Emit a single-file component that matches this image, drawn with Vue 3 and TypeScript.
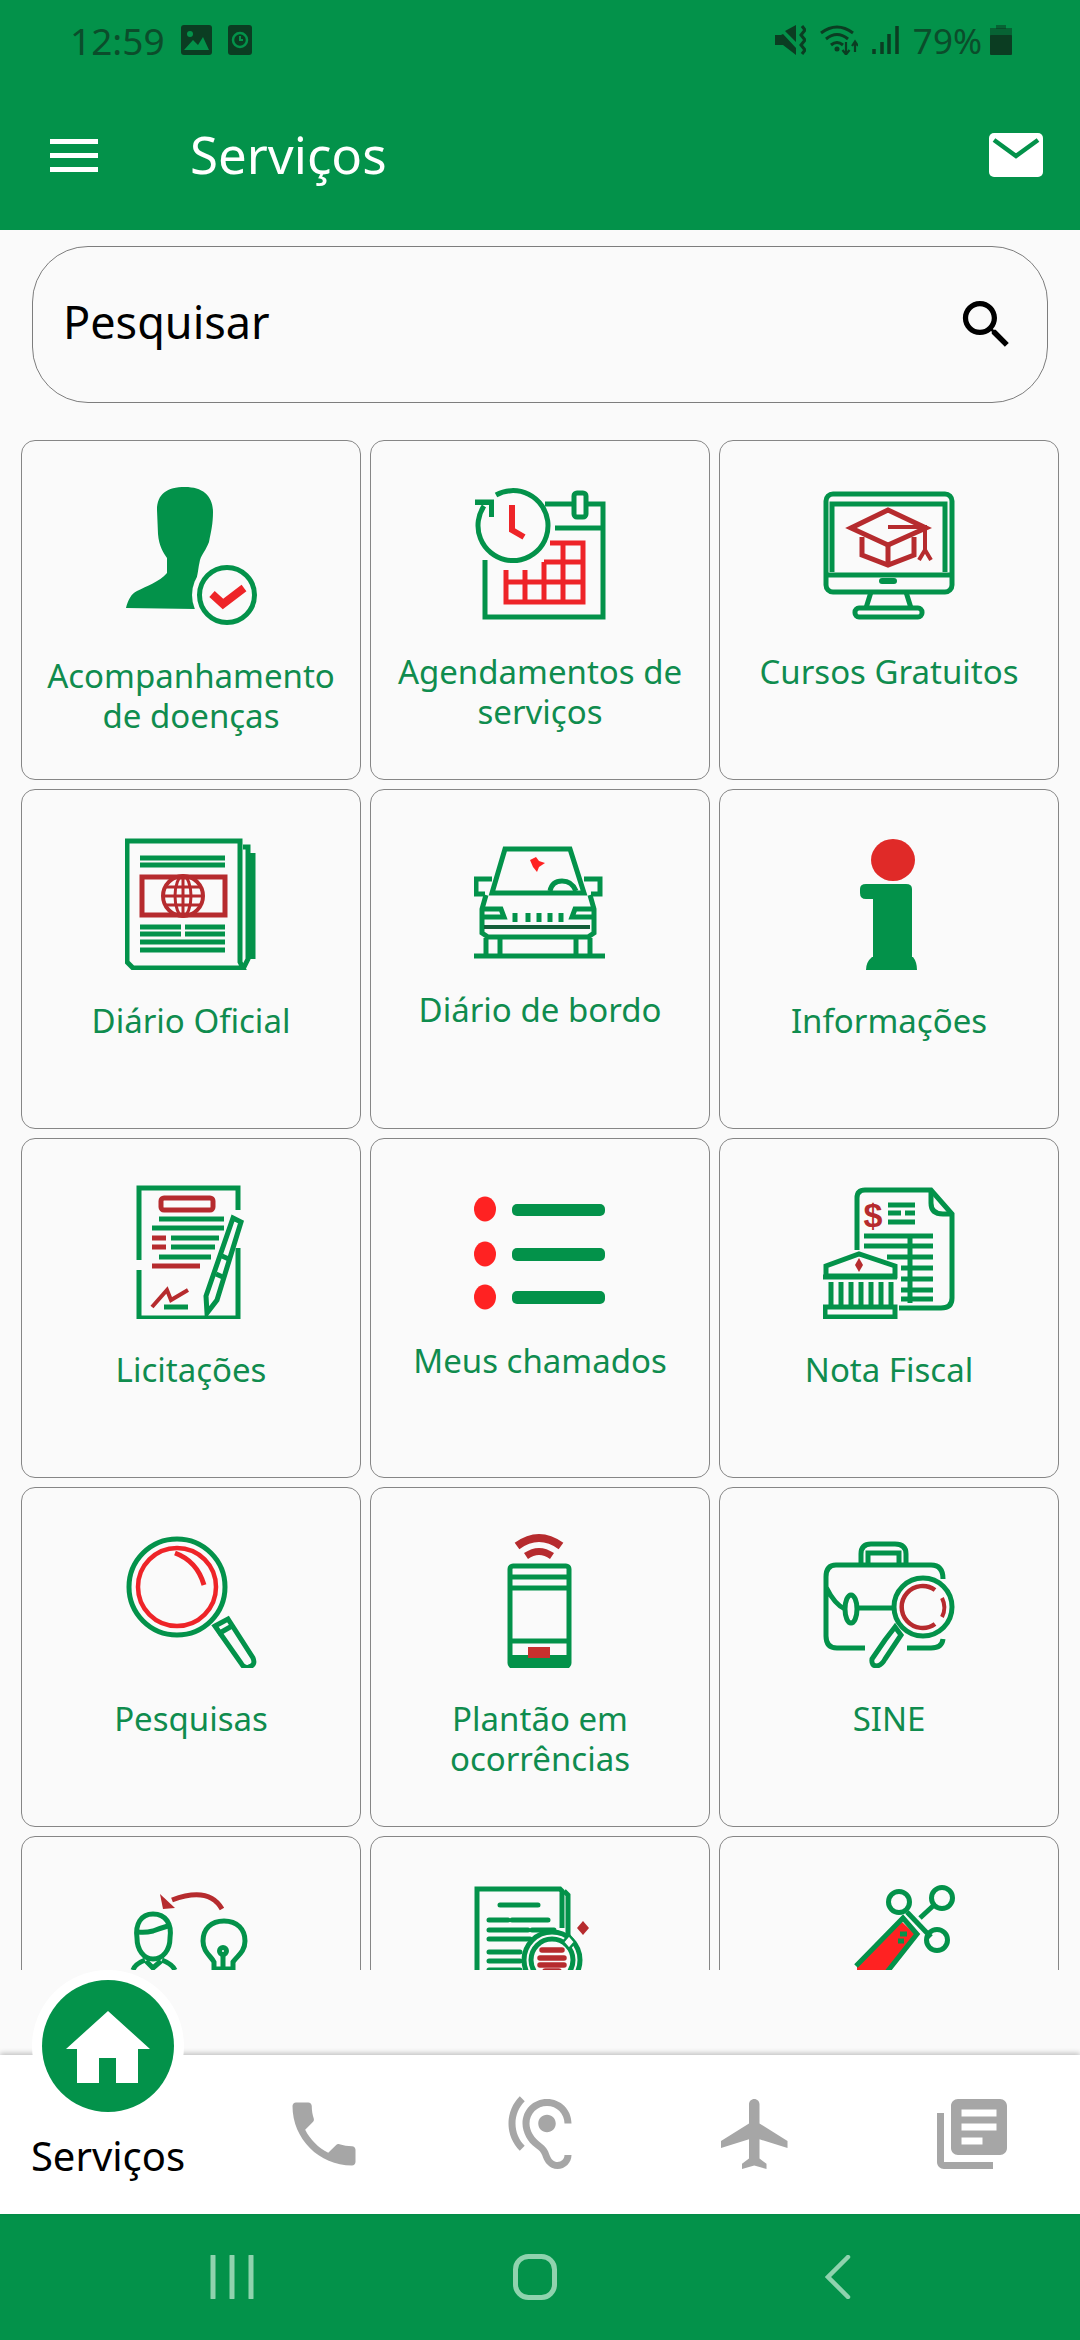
<template>
  <div class="screen">
    <header class="top">
      <div class="status">
        <div class="status-side">
          <span class="clock">12:59</span>
          <svg width="31" height="30" viewBox="0 0 31 30">
            <rect width="31" height="30" rx="3" fill="#0b3d22" />
            <circle cx="9" cy="9" r="3" fill="#03924a" />
            <path d="M3 25 L12 15 L17 20 L22 12 L28 25 Z" fill="#03924a" />
          </svg>
          <svg width="24" height="30" viewBox="0 0 24 30">
            <rect width="24" height="30" rx="3" fill="#0b3d22" />
            <circle cx="12" cy="15" r="7" fill="none" stroke="#03924a" stroke-width="2.5" />
            <path d="M12 11 V15 H15" fill="none" stroke="#03924a" stroke-width="2" />
          </svg>
        </div>
        <div class="status-side right">
          <svg width="31" height="30" viewBox="0 0 31 30">
            <path d="M0 10 H6 L8 9 L21 23 V30 L8 20 H0 Z M10 6 L21 0 V17 Z" fill="#0b3d22" />
            <path d="M27 1 L30 5 L26 10 L30 15 L26 20 L30 25 L27 29" fill="none" stroke="#0b3d22" stroke-width="3" />
          </svg>
          <svg width="38" height="30" viewBox="0 0 38 30">
            <path d="M1 8 Q17 -4 33 8 M6 14 Q17 5 28 14 M11 20 Q17 15 23 20" fill="none" stroke="#0b3d22" stroke-width="3" />
            <circle cx="17" cy="24" r="2.5" fill="#0b3d22" />
            <path d="M26 17 V29 M22.5 25 L26 29.5 L29.5 25 M35 27 V17 M32 21 L35 16.5 L38 21" fill="none" stroke="#0b3d22" stroke-width="2.2" />
          </svg>
          <svg width="27" height="28" viewBox="0 0 27 28">
            <path d="M2 23 V28 M10 16 V28 M17 8 V28 M25 0 V28" stroke="#0b3d22" stroke-width="3.5" />
          </svg>
          <span class="batt-text">79%</span>
          <svg class="batt" width="22" height="30" viewBox="0 0 22 30">
            <rect x="6" width="10" height="4" fill="#0b3d22" opacity="0.55" />
            <rect y="3" width="22" height="8" fill="#0b3d22" opacity="0.55" />
            <rect y="10" width="22" height="20" rx="1" fill="#0b3d22" />
          </svg>
        </div>
      </div>
      <div class="toolbar">
        <div class="burger"><i></i><i></i><i></i></div>
        <span class="title">Serviços</span>
        <svg width="54" height="44" viewBox="0 0 54 44">
          <rect width="54" height="44" rx="5" fill="#fff" />
          <path d="M5 7 L27 23 L49 7" fill="none" stroke="#03924a" stroke-width="4.5" />
        </svg>
      </div>
    </header>

    <div class="search">
      <span>Pesquisar</span>
      <svg width="63" height="63" viewBox="0 0 24 24">
        <path
          d="M15.5 14h-.79l-.28-.27C15.41 12.59 16 11.11 16 9.5 16 5.91 13.09 3 9.5 3S3 5.91 3 9.5 5.91 16 9.5 16c1.61 0 3.09-.59 4.23-1.57l.27.28v.79l5 4.99L20.49 19l-4.99-5zm-6 0C7.01 14 5 11.99 5 9.5S7.01 5 9.5 5 14 7.01 14 9.5 11.99 14 9.5 14z"
        />
      </svg>
    </div>

    <div class="list">
      <div class="grid">
        <div v-for="item in items" :key="item.id" class="card">
          <svg class="icon" width="132" :height="item.h" :viewBox="`0 0 132 ${item.h}`">
            <template v-if="item.id === 'doencas'">
              <path
                class="gf"
                d="M32 30 C32 14 42 7 60 7 C78 7 88 16 88 32 C88 44 86 52 84 62 C81 70 77 74 75 80 C73 88 73 96 70 104 V129 L1 128 C3 120 6 114 12 111 C22 106 34 102 42 93 V78 C38 72 34 66 33 54 Z"
              />
              <circle cx="102" cy="115" r="35" fill="#fafafa" />
              <circle class="g" cx="102" cy="115" r="27.5" stroke-width="7" />
              <path class="r" d="M87 114 L98 124 L119 108" stroke-width="8" />
            </template>

            <template v-else-if="item.id === 'agenda'">
              <path class="g" d="M71 24 H129 V137 H11 V80" />
              <path class="g" d="M81 48 H129" />
              <rect class="g wh" x="100" y="13" width="12" height="24" rx="3" />
              <path
                class="r"
                d="M76 63 H109 V122 H32 V90 M89 63 V122 M70 82 V122 M51 90 V122 M70 82 H109 M32 102 H109"
                stroke-width="5"
              />
              <path class="g wh" d="M22 15 A35 35 0 1 1 10 26" stroke-width="6" />
              <path class="gf" d="M1 19.5 H20 V37 H15 V25 H1 Z" />
              <path class="r" d="M38 25 V50 L50 57" stroke-width="6" />
            </template>

            <template v-else-if="item.id === 'cursos'">
              <rect class="g" x="3" y="14" width="126" height="98" rx="7" />
              <path class="g" d="M9 92 V24 H122 V92" stroke-width="3" />
              <path class="g" d="M3 95 H129" stroke-width="6" />
              <rect class="gf" x="56" y="98" width="18" height="6" rx="3" />
              <path class="g" d="M48 112 L43 128 M83 112 L88 128" />
              <rect class="g" x="32" y="128" width="67" height="9" rx="4" />
              <path class="dr" d="M39 57 V75 L65 85 L91 75 V57 M65 66 V85" stroke-width="5" />
              <path class="dr wh" d="M65 30 L103 48 L65 65 L28 48 Z" stroke-width="5" />
              <path class="dr" d="M65 47 H102 V72 M96 80 L102 70 L108 80" stroke-width="4" />
            </template>

            <template v-else-if="item.id === 'diario'">
              <path class="g" d="M118 18 H123 V130 L118 140 M128 24 V130" stroke-width="3.5" />
              <path class="g wh" d="M2 12 H115 V133 L118 139 H8 L2 133 Z" stroke-width="4" />
              <path class="g" d="M15 29 H100 M15 36 H100 M15 98 H56 M60 98 H100 M15 105 H56 M60 105 H100 M15 113 H100 M15 121 H100" stroke-width="4.5" />
              <rect class="dr" x="17" y="48" width="83" height="38" stroke-width="5" />
              <ellipse class="dr" cx="58" cy="67" rx="20" ry="20" stroke-width="4" />
              <ellipse class="dr" cx="58" cy="67" rx="8" ry="20" stroke-width="3" />
              <path class="dr" d="M38 67 H78 M58 47 V87 M41 58 H75 M41 76 H75" stroke-width="3" />
            </template>

            <template v-else-if="item.id === 'bordo'">
              <path class="g" d="M31 20 H96 L110 64 H18 Z" stroke-width="4.5" />
              <path class="g" d="M18 50 H2 V65 H11 M110 50 H126 V65 H117" stroke-width="4" />
              <path class="g" d="M76 62 Q78 52 88 52 Q98 52 102 62" stroke-width="4" />
              <path class="g" d="M12 66 L8 80 V104 L14 108 H114 L120 104 V80 L116 66" stroke-width="4" />
              <path class="g" d="M10 80 H27 L30 88 H10 M118 80 H101 L98 88 H118" stroke-width="3.5" />
              <path class="g" d="M41 84 V93 M54 84 V93 M65 84 V93 M76 84 V93 M87 84 V93" stroke-width="3" />
              <path d="M10 98 H116" fill="none" stroke="#155f3a" stroke-width="4" />
              <path class="g" d="M12 109 V125 M26 109 V125 M102 109 V125 M116 109 V125" stroke-width="3.5" />
              <path class="g" d="M0 127 H131" stroke-width="4" />
              <path class="rf" d="M56 31 L62 28 L65 32 L71 34 L65 38 L63 43 L59 38 Z" />
            </template>

            <template v-else-if="item.id === 'info'">
              <ellipse cx="70" cy="31" rx="22" ry="21" fill="#e02a28" />
              <path
                class="gf"
                d="M37 60 Q37 55 43 55 H83 Q89 55 89 60 V128 H90 Q94 133 94 141 H43 Q43 133 49 128 H50 V70 H43 Q37 70 37 64 Z"
              />
            </template>

            <template v-else-if="item.id === 'licitacoes'">
              <path class="g" d="M113 32 V10 H14 V82 M14 92 V140 H113 V70" stroke-width="4" />
              <rect class="dr" x="36" y="20" width="52" height="12" rx="3" stroke-width="5" />
              <path class="g" d="M34 41 H99 M27 50 H99 M46 60 H94 M46 69 H90 M34 79 H86 M39 129 H63" stroke-width="5" />
              <path class="dr" d="M27 60 H41 M27 69 H41 M27 88 H75" stroke-width="5" />
              <path class="dr" d="M27 129 L42 112 L46 122 L63 112" stroke-width="4" />
              <path class="g wh" d="M108 40 L116 44 L92 122 L82 135 L81 118 Z" stroke-width="3.5" />
              <path class="g" d="M97 78 L106 82 M91 96 L100 100" stroke-width="3" />
            </template>

            <template v-else-if="item.id === 'chamados'">
              <ellipse class="rf" cx="11" cy="31" rx="11" ry="12.5" />
              <ellipse class="rf" cx="11" cy="76" rx="11" ry="12.5" />
              <ellipse class="rf" cx="11" cy="119" rx="11" ry="12.5" />
              <rect class="gf" x="38" y="26" width="93" height="12" rx="5" />
              <rect class="gf" x="38" y="70" width="93" height="13" rx="5" />
              <rect class="gf" x="38" y="113" width="93" height="13" rx="5" />
            </template>

            <template v-else-if="item.id === 'nota'">
              <path class="g" d="M34 72 V20 Q34 12 42 12 H108 L129 36 V120 Q129 130 118 130 H76" stroke-width="4.5" />
              <path class="g" d="M108 12 V25 Q108 36 120 36 H129" stroke-width="4" />
              <path class="g" d="M65 27 H92 M65 35 H78 M82 35 H92 M65 44 H92 M41 58 H110 M41 68 H110 M64 79 H110 M78 90 H110 M78 101 H110 M78 112 H110 M78 121 H110" stroke-width="5" />
              <path class="g" d="M87 58 V125" stroke-width="4" />
              <text x="50" y="49" class="dollar">$</text>
              <path class="g wh" d="M3 98 V88 L36 76 L72 88 V98 Z" stroke-width="4.5" />
              <path class="drf" d="M36 80 L40 87 L36 94 L32 87 Z" />
              <path class="g" d="M0 99 H74" stroke-width="6" />
              <path class="g" d="M8 104 V127 M18 104 V127 M28 104 V127 M38 104 V127 M48 104 V127 M58 104 V127 M68 104 V127" stroke-width="4.5" />
              <rect class="g" x="2" y="129" width="70" height="10" stroke-width="4" />
            </template>

            <template v-else-if="item.id === 'pesquisas'">
              <path class="g" d="M90 99 L103 92 L128 131 Q131 138 124 140 Q119 142 116 136 Z" stroke-width="5" />
              <path class="g" d="M93 107 L107 99" stroke-width="4" />
              <circle class="g wh" cx="52" cy="60" r="48" stroke-width="6" />
              <circle class="r" cx="52" cy="60" r="39" stroke-width="4.5" />
              <path class="r" d="M50 26 Q72 34 79 58" stroke-width="5" />
            </template>

            <template v-else-if="item.id === 'plantao'">
              <path class="dr" d="M43 19 Q65 3 87 19" stroke-width="8" />
              <path class="dr" d="M52 29 Q65 20 78 29" stroke-width="7" />
              <rect class="g" x="36" y="39" width="59" height="100" rx="3" stroke-width="6" />
              <path class="g" d="M36 50 H95 M36 61 H95 M36 114 H95" stroke-width="4" />
              <path class="gf" d="M36 128 H95 V141 H36 Z" />
              <rect class="rf dk" x="54" y="120" width="22" height="11" />
            </template>

            <template v-else-if="item.id === 'sine'">
              <path class="g" d="M38 37 V27 Q38 17 48 17 H72 Q83 17 83 27 V37 M45 37 V26 H76 V37" stroke-width="4" />
              <path class="g" d="M120 52 Q120 38 108 38 H13 Q3 38 3 50 V109 Q3 121 14 121 H42 M84 121 H108 Q119 121 120 112 M3 60 Q12 78 22 82" stroke-width="4" />
              <ellipse class="g wh" cx="28" cy="82" rx="6" ry="14" stroke-width="4" />
              <path class="g" d="M34 81 H70" stroke-width="5" />
              <path class="g wh" d="M72 100 L62 113 L49 132 Q48 139 54 139 Q59 138 62 132 L78 108 Z" stroke-width="4" />
              <circle class="g wh" cx="100" cy="80" r="29" stroke-width="5" />
              <path class="dr" d="M112 97 A21 21 0 1 1 112 63" stroke-width="4.5" />
              <path class="dr" d="M119 71 A21 21 0 0 1 119 90" stroke-width="4" />
            </template>

            <template v-else-if="item.id === 'atendimento'">
              <path class="dr" d="M97 33 Q84 10 47 24" stroke-width="5" />
              <path class="drf" d="M35 18 L38 33 L50 32 Z" />
              <path class="g" d="M12 62 C10 48 16 38 28 38 C41 38 47 48 45 62 C45 74 38 83 28 83 C19 83 12 74 12 62 Z" stroke-width="4" />
              <path class="g" d="M13 56 Q20 57 28 55 Q36 52 43 50" stroke-width="4" />
              <path class="g" d="M8 94 Q10 88 20 84 M50 94 Q47 88 37 84 M21 85 L28 92 L36 85" stroke-width="4" />
              <path class="g" d="M89 93 V86 C86 80 78 76 78 65 C78 53 86 45 99 45 C112 45 120 53 120 65 C120 76 112 80 108 86 V93 Z" stroke-width="4" />
              <circle class="g" cx="98" cy="75" r="3.5" stroke-width="3" />
              <path class="g" d="M98 79 V92" stroke-width="3" />
            </template>

            <template v-else-if="item.id === 'documento'">
              <path class="g" d="M3 100 V13 H86 L88 15 V52" stroke-width="5" />
              <path class="g" d="M90 15 L94 19 V62" stroke-width="3" />
              <path class="g round" d="M26 29 H64 M15 44 H34 M38 44 H74 M15 54 H54 M58 54 H80 M15 63 H56 M15 76 H46 M15 85 H46 M15 94 H46" stroke-width="5" />
              <circle class="g wh" cx="78" cy="84" r="28" stroke-width="5" />
              <circle class="g" cx="78" cy="84" r="21" stroke-width="3" />
              <path class="dr round" d="M68 74 H88 M66 82 H90 M66 89 H90 M71 95 H85" stroke-width="5.5" />
              <path d="M95 59 L101 66 L95 73 L89 66 Z" fill="#fafafa" stroke="#03924a" stroke-width="2.5" />
              <path class="drf" d="M109 45 L115 52 L109 59 L103 52 Z" />
            </template>

            <template v-else-if="item.id === 'teste'">
              <circle class="g" cx="76" cy="26" r="10.5" stroke-width="4.5" />
              <circle class="g" cx="119" cy="22" r="10.5" stroke-width="4.5" />
              <circle class="g" cx="114" cy="64" r="10.5" stroke-width="4.5" />
              <path class="g" d="M97 42 L110 30 M104 57 L108 61" stroke-width="4.5" />
              <path class="rf" d="M79 46 L94 60 L65 96 L34 96 V88 Z" />
              <path class="g" d="M33 90 L80 42 L94 58 L64 96" stroke-width="4" />
              <path class="g" d="M84 36 L104 57" stroke-width="4" />
              <path class="g" d="M77 58 H84 M75 65 H81" stroke-width="3" />
            </template>
          </svg>
          <div v-if="item.label" class="label">{{ item.label }}</div>
        </div>
      </div>
    </div>

    <nav class="tabs">
      <div class="tab active">
        <div class="home-badge">
          <svg width="84" height="72" viewBox="0 0 84 72">
            <path d="M42 0 L84 38 H72 V72 H50 V47 H33 V72 H11 V38 H0 Z" />
          </svg>
        </div>
        <span>Serviços</span>
      </div>
      <div class="tab">
        <svg width="84" height="84" viewBox="0 0 24 24">
          <path
            d="M6.62 10.79c1.44 2.83 3.76 5.14 6.59 6.59l2.2-2.2c.27-.27.67-.36 1.02-.24 1.12.37 2.33.57 3.57.57.55 0 1 .45 1 1V20c0 .55-.45 1-1 1-9.39 0-17-7.61-17-17 0-.55.45-1 1-1h3.5c.55 0 1 .45 1 1 0 1.25.2 2.45.57 3.57.11.35.03.74-.25 1.02l-2.2 2.2z"
          />
        </svg>
      </div>
      <div class="tab">
        <svg width="84" height="84" viewBox="0 0 24 24">
          <path
            d="M17 20c-.29 0-.56-.06-.76-.15-.71-.37-1.21-.88-1.71-2.38-.51-1.56-1.47-2.29-2.39-3-.79-.61-1.61-1.24-2.32-2.53C9.29 10.98 9 9.93 9 9c0-2.8 2.2-5 5-5s5 2.2 5 5h2c0-3.93-3.07-7-7-7S7 5.07 7 9c0 1.26.38 2.65 1.07 3.9.91 1.65 1.98 2.48 2.85 3.15.81.62 1.39 1.07 1.71 2.05.6 1.82 1.37 2.84 2.73 3.55.51.23 1.07.35 1.64.35 2.21 0 4-1.79 4-4h-2c0 1.1-.9 2-2 2zM7.64 2.64L6.22 1.22C4.23 3.21 3 5.96 3 9s1.23 5.79 3.22 7.78l1.41-1.41C6.01 13.74 5 11.49 5 9s1.01-4.74 2.64-6.36zM11.5 9c0 1.38 1.12 2.5 2.5 2.5s2.5-1.12 2.5-2.5-1.12-2.5-2.5-2.5-2.5 1.12-2.5 2.5z"
          />
        </svg>
      </div>
      <div class="tab">
        <svg width="84" height="84" viewBox="0 0 24 24">
          <path d="M21 16v-2l-8-5V3.5c0-.83-.67-1.5-1.5-1.5S10 2.67 10 3.5V9l-8 5v2l8-2.5V19l-2 1.5V22l3.5-1 3.5 1v-1.5L13 19v-5.5l8 2.5z" />
        </svg>
      </div>
      <div class="tab">
        <svg width="84" height="84" viewBox="0 0 24 24">
          <path
            d="M4 6H2v14c0 1.1.9 2 2 2h14v-2H4V6zm16-4H8c-1.1 0-2 .9-2 2v12c0 1.1.9 2 2 2h12c1.1 0 2-.9 2-2V4c0-1.1-.9-2-2-2zm-1 9H9V9h10v2zm-4 4H9v-2h6v2zm4-8H9V5h10v2z"
          />
        </svg>
      </div>
    </nav>

    <div class="sysnav">
      <svg width="44" height="44" viewBox="0 0 44 44">
        <path d="M3 1 V43 M22 1 V43 M41 1 V43" stroke="#8fd3ae" stroke-width="5" stroke-linecap="round" />
      </svg>
      <svg width="44" height="46" viewBox="0 0 44 46">
        <rect x="2.5" y="2.5" width="39" height="41" rx="13" fill="none" stroke="#8fd3ae" stroke-width="5" />
      </svg>
      <svg width="26" height="44" viewBox="0 0 26 44">
        <path d="M23 2 L3 22 L23 42" fill="none" stroke="#8fd3ae" stroke-width="4.5" stroke-linecap="round" />
      </svg>
    </div>
  </div>
</template>

<script setup lang="ts">
interface Service {
  id: string
  label?: string
  h: number
}

const items: Service[] = [
  { id: 'doencas', label: 'Acompanhamento de doenças', h: 145 },
  { id: 'agenda', label: 'Agendamentos de serviços', h: 141 },
  { id: 'cursos', label: 'Cursos Gratuitos', h: 141 },
  { id: 'diario', label: 'Diário Oficial', h: 141 },
  { id: 'bordo', label: 'Diário de bordo', h: 130 },
  { id: 'info', label: 'Informações', h: 141 },
  { id: 'licitacoes', label: 'Licitações', h: 141 },
  { id: 'chamados', label: 'Meus chamados', h: 132 },
  { id: 'nota', label: 'Nota Fiscal', h: 141 },
  { id: 'pesquisas', label: 'Pesquisas', h: 141 },
  { id: 'plantao', label: 'Plantão em ocorrências', h: 141 },
  { id: 'sine', label: 'SINE', h: 141 },
  // last row is cut off by the tab bar, labels never show
  { id: 'atendimento', h: 141 },
  { id: 'documento', h: 141 },
  { id: 'teste', h: 141 }
]
</script>

<style>
html,
body {
  margin: 0;
  background: #fafafa;
}
</style>

<style scoped>
.screen {
  width: 1080px;
  height: 2340px;
  display: flex;
  flex-direction: column;
  overflow: hidden;
  background: #fafafa;
  font-family: 'Noto Sans', sans-serif;
}

.top {
  height: 230px;
  background: #03924a;
  flex: none;
}

.status {
  height: 80px;
  padding: 0 68px 0 70px;
  display: flex;
  justify-content: space-between;
  align-items: center;
}

.status-side {
  display: flex;
  align-items: center;
  gap: 16px;
}

.status-side.right {
  gap: 14px;
}

.clock,
.batt-text {
  font-size: 37px;
  color: #0b4d2b;
}

.batt-text {
  font-size: 35px;
}

.batt {
  margin-left: -6px;
}

.toolbar {
  height: 150px;
  padding: 0 37px 0 50px;
  display: flex;
  align-items: center;
}

.burger {
  width: 48px;
  display: flex;
  flex-direction: column;
  gap: 9px;
}

.burger i {
  height: 5px;
  background: #fff;
}

.title {
  margin-left: 92px;
  margin-bottom: 3px;
  font-size: 51px;
  color: #fff;
  flex: 1;
}

.search {
  height: 157px;
  box-sizing: border-box;
  margin: 16px 32px 37px;
  padding: 0 33px 0 30px;
  border: 1.5px solid #7d7d7d;
  border-radius: 56px;
  display: flex;
  align-items: center;
  justify-content: space-between;
  font-size: 45px;
  color: #000;
  flex: none;
}

.search span {
  margin-bottom: 6px;
}

.search svg {
  margin-right: -4px;
}

.list {
  flex: 1;
  overflow: hidden;
  margin-bottom: 85px;
  padding: 0 21px;
}

.grid {
  display: grid;
  grid-template-columns: repeat(3, 340px);
  justify-content: space-between;
  row-gap: 9px;
}

.card {
  height: 340px;
  box-sizing: border-box;
  padding-top: 39px;
  border: 1.5px solid #868686;
  border-radius: 14px;
  background: #fafafa;
  display: flex;
  flex-direction: column;
  align-items: center;
  text-align: center;
}

.icon {
  flex: none;
}

.label {
  margin-top: 31px;
  padding: 0 12px;
  font-size: 33px;
  line-height: 40px;
  color: #0f8c4e;
}

.g {
  fill: none;
  stroke: #03924a;
  stroke-width: 5;
}

.g.wh,
.dr.wh {
  fill: #fafafa;
}

.round {
  stroke-linecap: round;
}

.gf {
  fill: #03924a;
}

.r {
  fill: none;
  stroke: #ee2428;
}

.rf {
  fill: #ff2222;
}

.rf.dk {
  fill: #c8302e;
}

.dr {
  fill: none;
  stroke: #b62b2e;
}

.drf {
  fill: #b62b2e;
}

.dollar {
  font-family: 'Liberation Sans', sans-serif;
  font-size: 34px;
  font-weight: 700;
  fill: #b62b2e;
  text-anchor: middle;
}

.tabs {
  height: 159px;
  background: #fff;
  box-shadow: 0 -2px 5px rgba(0, 0, 0, 0.22);
  display: grid;
  grid-template-columns: repeat(5, 216px);
  flex: none;
  position: relative;
}

.tab {
  display: flex;
  align-items: center;
  justify-content: center;
  padding-bottom: 1px;
  box-sizing: border-box;
}

.tab svg {
  fill: #a6a6a6;
}

.tab.active {
  align-items: flex-end;
  padding-bottom: 35px;
  position: relative;
}

.tab.active span {
  font-size: 40px;
  line-height: 46px;
  color: #000;
}

.home-badge {
  position: absolute;
  left: 42px;
  top: -75px;
  width: 132px;
  height: 132px;
  border-radius: 50%;
  background: #03924a;
  box-shadow: 0 0 0 10px #fff;
  display: flex;
  align-items: center;
  justify-content: center;
}

.home-badge svg {
  fill: #fff;
  margin-top: 2px;
}

.sysnav {
  height: 126px;
  box-sizing: border-box;
  padding-left: 210px;
  background: #03924a;
  flex: none;
  display: grid;
  grid-template-columns: 303px 312px auto;
  justify-content: start;
  align-items: center;
}
</style>
